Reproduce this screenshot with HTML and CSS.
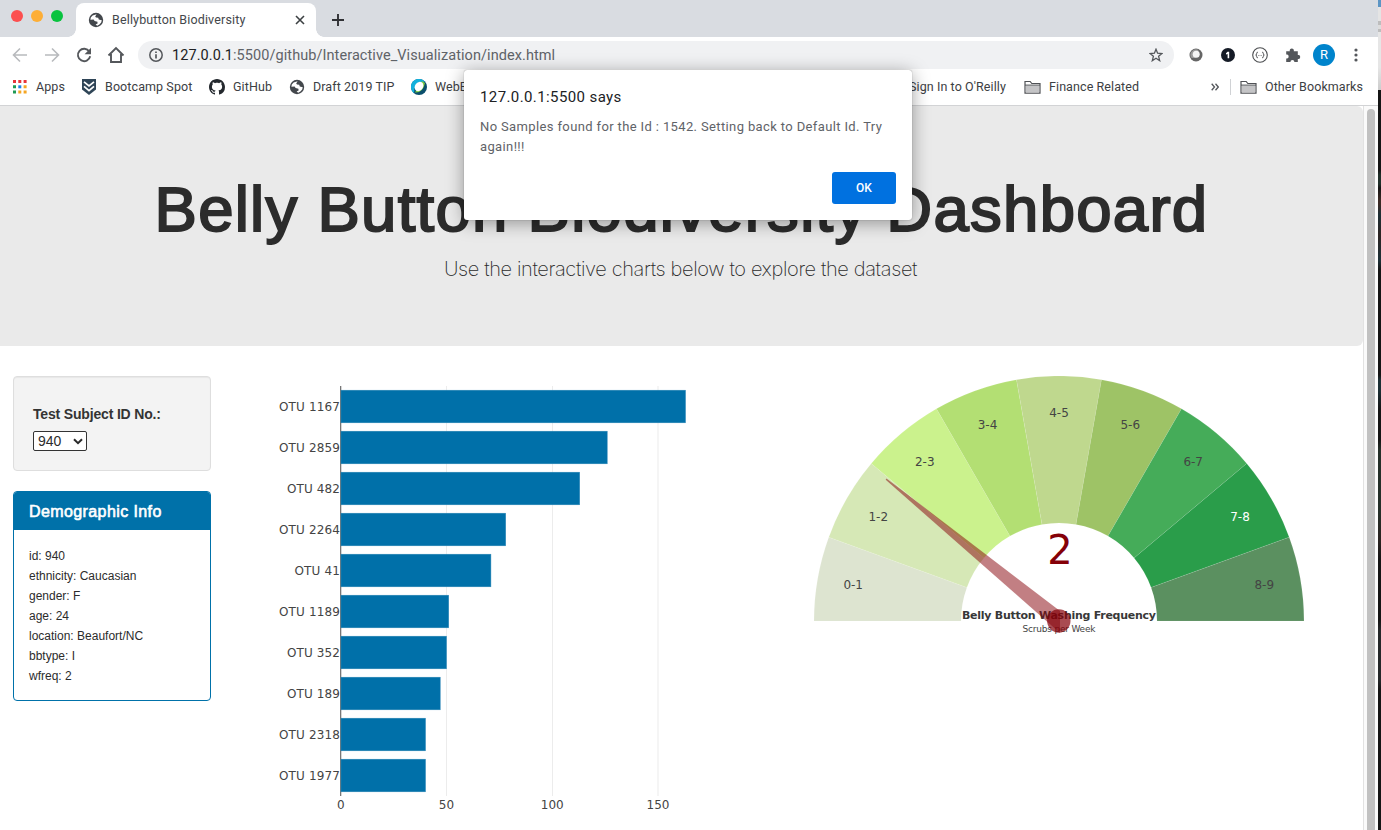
FILE: index.html
```html
<!DOCTYPE html>
<html lang="en">
<head>
<meta charset="utf-8">
<title>Bellybutton Biodiversity</title>
<link rel="stylesheet" href="styles.css">
</head>
<body>
<svg class="defs" width="0" height="0" aria-hidden="true">
  <symbol id="globe" viewBox="0 0 16 16">
    <circle cx="8" cy="8" r="7.2" fill="#43474c"/>
    <path d="M8.600 2.200 7.200 4.600 8 5.600 10.200 5.800 10.800 7.400 13.800 8.200 13.200 10.400 11.400 12.600 9.200 13.800 7.600 12.600 9.600 11.400 9.400 9.800 6.600 9 5.600 7.400 2.400 7.800 2.800 5.400 4.600 3.400z" fill="#fff"/>
  </symbol>
  <symbol id="folder" viewBox="0 0 17 15">
    <path d="M1 13.2V1.500h5.200l1.600 2H16v9.700z" fill="#fff" stroke="#505256" stroke-width="1.200"/>
    <path d="M2 5.600h13v6.900H2z" fill="#c4c4c6"/>
    <path d="M1 5.100h15" stroke="#505256"/>
  </symbol>
</svg>
<div class="screen">
  <div class="window">
    <header class="tabstrip">
      <div class="lights"><i class="red"></i><i class="amber"></i><i class="green"></i></div>
      <div class="tab">
        <svg class="favicon" width="16" height="16"><use href="#globe"/></svg>
        <span class="tab-title">Bellybutton Biodiversity</span>
        <svg class="close" width="10" height="10" viewBox="0 0 10 10"><path d="M1 1l8 8M9 1l-8 8" stroke="#3c4043" stroke-width="1.600"/></svg>
      </div>
      <svg class="newtab" width="12" height="12" viewBox="0 0 12 12"><path d="M6 0v12M0 6h12" stroke="#303134" stroke-width="1.900"/></svg>
    </header>

    <div class="toolbar">
      <svg class="nav" width="16" height="16" viewBox="0 0 16 16"><path d="M15 8H2M8 1.500 1.500 8 8 14.500" fill="none" stroke="#b8babd" stroke-width="1.600"/></svg>
      <svg class="nav" width="16" height="16" viewBox="0 0 16 16"><path d="M1 8h13M8 1.500 14.500 8 8 14.500" fill="none" stroke="#b8babd" stroke-width="1.600"/></svg>
      <svg class="nav" width="16" height="16" viewBox="0 0 16 16"><path d="M13.300 4.500A6.200 6.200 0 1 0 14.200 9.300" fill="none" stroke="#54575b" stroke-width="1.900"/><path d="M15 .8v6.400H8.600z" fill="#54575b"/></svg>
      <svg class="nav" width="18" height="18" viewBox="0 0 18 18"><path d="M1.500 9.500 9 2l7.500 7.500M4 8v8h10V8" fill="none" stroke="#54575b" stroke-width="1.900"/></svg>
      <div class="omnibox">
        <svg width="14" height="14" viewBox="0 0 14 14"><circle cx="7" cy="7" r="6.200" fill="none" stroke="#54575b" stroke-width="1.500"/><path d="M7 6.200v4.300M7 3.400v1.700" stroke="#54575b" stroke-width="1.700"/></svg>
        <span class="url"><b>127.0.0.1</b>:5500/github/Interactive_Visualization/index.html</span>
        <svg class="star" width="14" height="14" viewBox="0 0 14 14"><path d="M7 1.200 8.600 5.200 13 5.500 9.600 8.300 10.700 12.700 7 10.300 3.300 12.700 4.400 8.300 1 5.500 5.400 5.200z" fill="none" stroke="#54575b" stroke-width="1.300"/></svg>
      </div>
      <div class="extensions">
        <svg width="14" height="14" viewBox="0 0 14 14"><circle cx="7" cy="7" r="6.500" fill="#656565"/><path d="M2 9.500A5.600 5.600 0 0 1 9 1.800a5.500 5.500 0 0 1-7 7.700z" fill="#9b9b9b"/><circle cx="7.200" cy="6.300" r="3.500" fill="#f4f4f4"/></svg>
        <svg width="14" height="14" viewBox="0 0 14 14"><circle cx="7" cy="7" r="7" fill="#151b26"/><path d="M5 5.300 6.500 3.800h1.700v6.400H6.600V5.900L5 6.600z" fill="#fff"/></svg>
        <svg width="16" height="16" viewBox="0 0 16 16"><circle cx="8" cy="8" r="7.300" fill="#fff" stroke="#4b4d50" stroke-width="1.100"/><path d="M5.800 5.200Q4.600 5.200 4.700 6.400 4.800 7.800 3.700 8 4.800 8.200 4.700 9.600 4.600 10.800 5.800 10.800M10.200 5.200q1.200 0 1.100 1.200-.1 1.400 1 1.600-1.100.2-1 1.600.1 1.200-1.100 1.200M6.500 8.500h.8M8.700 8.500h.8" fill="none" stroke="#4b4d50"/></svg>
        <svg width="16" height="16" viewBox="0 0 16 16"><path d="M1.200 4.200h3.600a2.100 2.100 0 1 1 4 0h4v3.900a2 2 0 1 1 0 3.900v3H9.400a2 2 0 1 0-4 0H1.200v-3.600a2 2 0 1 0 0-3.900z" fill="#54575b"/></svg>
        <span class="avatar">R</span>
        <svg width="4" height="14" viewBox="0 0 4 14"><g fill="#54575b"><circle cx="2" cy="2" r="1.600"/><circle cx="2" cy="7" r="1.600"/><circle cx="2" cy="12" r="1.600"/></g></svg>
      </div>
    </div>

    <nav class="bookmarks">
      <span class="bm bm-apps"><svg width="14" height="14" viewBox="0 0 14 14"><path d="M0 0h3v3H0zM5.300 0h3v3h-3zM10.600 0h3v3h-3z" fill="#e8343a"/><path d="M0 5.300h3v3H0zM0 10.600h3v3H0z" fill="#1e9a55"/><path d="M5.300 5.300h3v3h-3z" fill="#1a80e6"/><path d="M10.600 5.300h3v3h-3zM5.300 10.600h3v3h-3zM10.600 10.600h3v3h-3z" fill="#f5a623"/></svg>Apps</span>
      <span class="bm bm-boot"><svg width="16" height="16" viewBox="0 0 16 16"><path d="M1 0h14v10.500L8 16 1 10.500z" fill="#2f4557"/><path d="M3 2.800 8 6.800l5-4M3 7.400 8 11.600l5-4.200" fill="none" stroke="#fff" stroke-width="1.700"/></svg>Bootcamp Spot</span>
      <span class="bm bm-git"><svg width="16" height="16" viewBox="0 0 16 16"><path fill="#24292e" d="M8 0C3.580 0 0 3.580 0 8c0 3.540 2.290 6.530 5.470 7.590.4.070.55-.17.55-.38 0-.19-.01-.82-.01-1.490-2.010.37-2.530-.49-2.690-.94-.09-.23-.48-.94-.82-1.130-.28-.15-.68-.52-.01-.53.63-.01 1.080.58 1.230.82.72 1.210 1.870.87 2.330.66.070-.52.28-.87.51-1.070-1.780-.2-3.640-.89-3.640-3.950 0-.87.31-1.590.82-2.150-.08-.2-.36-1.020.08-2.120 0 0 .67-.21 2.200.82.64-.18 1.320-.27 2-.27s1.360.09 2 .27c1.530-1.040 2.200-.82 2.200-.82.44 1.100.16 1.920.08 2.120.51.56.82 1.270.82 2.150 0 3.070-1.870 3.750-3.650 3.950.29.25.54.73.54 1.480 0 1.070-.01 1.930-.01 2.200 0 .21.15.46.55.38A8.010 8.010 0 0 0 16 8c0-4.420-3.580-8-8-8z"/></svg>GitHub</span>
      <span class="bm bm-draft"><svg width="16" height="16"><use href="#globe"/></svg>Draft 2019 TIP</span>
      <span class="bm bm-webex"><svg width="16" height="16" viewBox="0 0 16 16"><circle cx="8" cy="8" r="8" fill="#0b4f6c"/><path d="M3 14.200A8 8 0 1 1 14 2.700L8 3 3.500 9z" fill="#12b0dc"/><path d="M4 13.500Q12 14 14 4l-3-2z" fill="#7ac943"/><ellipse cx="7.700" cy="7.600" rx="4" ry="5" fill="#fff" transform="rotate(38 8 8)"/></svg>WebEx</span>
      <span class="bm bm-oreilly">Sign In to O'Reilly</span>
      <span class="bm bm-finance"><svg width="17" height="15"><use href="#folder"/></svg>Finance Related</span>
      <svg class="more" width="8" height="8" viewBox="0 0 8 8"><path d="M.7.8 3.500 4 .7 7.200M4.500.8 7.300 4 4.500 7.200" fill="none" stroke="#54575b" stroke-width="1.300"/></svg>
      <span class="bm bm-other"><svg width="17" height="15"><use href="#folder"/></svg>Other Bookmarks</span>
    </nav>

    <div class="viewport">
      <main class="page">
        <section class="jumbotron">
          <h1>Belly Button Biodiversity Dashboard</h1>
          <p>Use the interactive charts below to explore the dataset</p>
        </section>
        <div class="row">
          <aside class="side">
            <div class="well">
              <h5>Test Subject ID No.:</h5>
              <div class="select">940<svg width="10" height="7" viewBox="0 0 10 7"><path d="M1 1.200 5 5.200l4-4" fill="none" stroke="#2a2a2a" stroke-width="2"/></svg></div>
            </div>
            <div class="panel">
              <h3>Demographic Info</h3>
              <ul>
                <li>id: 940</li><li>ethnicity: Caucasian</li><li>gender: F</li><li>age: 24</li><li>location: Beaufort/NC</li><li>bbtype: I</li><li>wfreq: 2</li>
              </ul>
            </div>
          </aside>
          <svg class="bar-chart" width="560" height="454" viewBox="241 376 560 454">
            <g fill="#ececec"><path d="M446 386h1v410h-1zM552 386h1v410h-1zM657.500 386h1v410h-1z"/></g>
            <path d="M340 386h1.300v410H340z" fill="#777"/>
            <g fill="#0070a9" stroke="#2a86b7" stroke-width=".5">
              <rect x="341" y="390.200" width="344.500" height="32.600"/>
              <rect x="341" y="431.200" width="266.200" height="32.600"/>
              <rect x="341" y="472.200" width="238.700" height="32.600"/>
              <rect x="341" y="513.200" width="164.700" height="32.600"/>
              <rect x="341" y="554.200" width="149.900" height="32.600"/>
              <rect x="341" y="595.200" width="107.700" height="32.600"/>
              <rect x="341" y="636.200" width="105.500" height="32.600"/>
              <rect x="341" y="677.200" width="99.200" height="32.600"/>
              <rect x="341" y="718.200" width="84.500" height="32.600"/>
              <rect x="341" y="759.200" width="84.500" height="32.600"/>
            </g>
            <g class="tick" text-anchor="end">
              <text x="340" y="411" textLength="61">OTU 1167</text>
              <text x="340" y="452" textLength="61">OTU 2859</text>
              <text x="340" y="493" textLength="53">OTU 482</text>
              <text x="340" y="534" textLength="61">OTU 2264</text>
              <text x="340" y="575" textLength="45.500">OTU 41</text>
              <text x="340" y="616" textLength="61">OTU 1189</text>
              <text x="340" y="657" textLength="53">OTU 352</text>
              <text x="340" y="698" textLength="53">OTU 189</text>
              <text x="340" y="739" textLength="61">OTU 2318</text>
              <text x="340" y="780" textLength="61">OTU 1977</text>
            </g>
            <g class="tick" text-anchor="middle">
              <text x="340.700" y="809">0</text><text x="446.500" y="809">50</text><text x="552.300" y="809">100</text><text x="658" y="809">150</text>
            </g>
          </svg>
          <svg class="gauge" width="562" height="454" viewBox="801 376 562 454">
            <g transform="translate(1059 621)">
              <g stroke="#fff" stroke-opacity=".18" stroke-width=".5">
                <path fill="#dde4d0" d="M-245 0A245 245 0 0 1-230.200-83.800L-92.100-33.500A98 98 0 0 0-98 0z"/>
                <path fill="#d6e8b6" d="M-230.200-83.800A245 245 0 0 1-187.700-157.500L-75.100-63A98 98 0 0 0-92.100-33.500z"/>
                <path fill="#cbf28d" d="M-187.700-157.500A245 245 0 0 1-122.500-212.200L-49-84.900A98 98 0 0 0-75.100-63z"/>
                <path fill="#b3df73" d="M-122.500-212.200A245 245 0 0 1-42.500-241.300L-17-96.500A98 98 0 0 0-49-84.900z"/>
                <path fill="#bfd88e" d="M-42.500-241.300A245 245 0 0 1 42.500-241.300L17-96.500A98 98 0 0 0-17-96.500z"/>
                <path fill="#9ec366" d="M42.500-241.300A245 245 0 0 1 122.500-212.200L49-84.900A98 98 0 0 0 17-96.500z"/>
                <path fill="#45ac59" d="M122.500-212.200A245 245 0 0 1 187.700-157.500L75.100-63A98 98 0 0 0 49-84.900z"/>
                <path fill="#2a9d4a" d="M187.700-157.500A245 245 0 0 1 230.200-83.800L92.100-33.500A98 98 0 0 0 75.100-63z"/>
                <path fill="#5b9060" d="M230.200-83.800A245 245 0 0 1 245 0L98 0A98 98 0 0 0 92.100-33.500z"/>
              </g>
            </g>
            <g class="tick" text-anchor="middle">
              <text x="853.200" y="589">0-1</text><text x="878.300" y="521">1-2</text><text x="924.800" y="466">2-3</text>
              <text x="987.500" y="429">3-4</text><text x="1059" y="417">4-5</text><text x="1130.300" y="429">5-6</text>
              <text x="1193.200" y="466">6-7</text><text x="1240" y="521" class="on-dark">7-8</text><text x="1264.300" y="589">8-9</text>
            </g>
            <g text-anchor="middle">
              <text class="reading" x="1060" y="564">2</text>
              <text class="gauge-title" x="1059" y="619" textLength="194">Belly Button Washing Frequency</text>
              <text class="gauge-sub" x="1059" y="632" textLength="73">Scrubs per Week</text>
            </g>
            <path d="M1060 611 886.500 478.500 885.700 479.800 1060 633z" fill="#850008" fill-opacity=".5"/>
            <circle cx="1058.800" cy="621" r="11.700" fill="#850008" fill-opacity=".7"/>
          </svg>
        </div>
      </main>
      <div class="scrollbar"><div class="thumb"></div></div>
    </div>
  </div>
  <div class="desktop"><i class="blue"></i><i class="grey"></i><i class="code"></i></div>
</div>

<div class="dialog">
  <h2>127.0.0.1:5500 says</h2>
  <p>No Samples found for the Id : 1542. Setting back to Default Id. Try again!!!</p>
  <button>OK</button>
</div>
</body>
</html>
```
FILE: styles.css
```css
* { box-sizing: border-box; margin: 0; padding: 0; }
body { width: 1381px; height: 830px; overflow: hidden; position: relative; background: #fff; font-family: Roboto, sans-serif; }
svg { display: block; flex: none; }
.defs { position: absolute; }
.screen { display: flex; height: 830px; }
.window { width: 1378px; display: flex; flex-direction: column; }

/* Tab strip */
.tabstrip { height: 37px; background: #d9dce1; display: flex; align-items: flex-end; }
.lights { display: flex; gap: 8px; padding-left: 11px; width: 76px; height: 37px; padding-top: 10px; }
.lights i { width: 12px; height: 12px; border-radius: 50%; }
.red { background: #fc4f4f; }
.amber { background: #fdae36; }
.green { background: #09c33f; }
.tab { width: 240px; height: 34px; background: #fff; border-radius: 8px 8px 0 0; display: flex; align-items: center; padding: 0 11px 0 12px; position: relative; }
.tab::before, .tab::after { content: ""; position: absolute; bottom: 0; width: 8px; height: 8px; }
.tab::before { left: -8px; background: radial-gradient(circle at 0 0, transparent 7.500px, #fff 8px); }
.tab::after { right: -8px; background: radial-gradient(circle at 100% 0, transparent 7.500px, #fff 8px); }
.tab-title { margin-left: 8px; padding-bottom: 2px; font-size: 12.500px; letter-spacing: .15px; color: #44474b; flex: 1; white-space: nowrap; }
.newtab { margin: 0 0 11px 16px; }

/* Toolbar */
.toolbar { height: 36px; display: flex; align-items: center; padding-left: 12px; }
.nav { margin-right: 16px; }
.nav:nth-child(4) { margin: 0 13px 0 -1px; }
.omnibox { width: 1036px; height: 28px; border-radius: 14px; background: #f0f1f3; display: flex; align-items: center; padding: 0 11px; }
.url { margin-left: 9px; flex: 1; font-size: 14.500px; letter-spacing: .07px; color: #5f6368; }
.url b { font-weight: 400; color: #202124; }
.extensions { display: flex; align-items: center; margin-left: 15px; gap: 17px; }
.extensions svg:nth-child(2) { margin-left: 1px; }
.avatar { width: 22px; height: 22px; margin: 0 0 0 -5px; border-radius: 50%; background: #0084cc; color: #fff; font-size: 13px; line-height: 22px; text-align: center; }
.extensions .avatar + svg { margin-left: 2px; }

/* Bookmarks bar */
.bookmarks { height: 33px; display: flex; align-items: center; padding: 0 15px 4px 13px; border-bottom: 1px solid #d2d3d5; color: #3c4043; font-size: 12.500px; line-height: 16px; letter-spacing: .09px; white-space: nowrap; }
.bm { display: flex; align-items: center; gap: 8px; flex: none; }
.bm-apps { width: 68px; gap: 9px; }
.bm-boot { width: 128px; }
.bm-git { width: 80px; }
.bm-draft { width: 122px; }
.bm-webex { width: 498px; }
.bm-oreilly { width: 115px; }
.bm-finance { width: 187px; }
.more { margin-right: 11px; }
.bm-other { border-left: 1px solid #d0d2d5; padding-left: 9px; height: 16px; }

/* Page */
.viewport { flex: 1; display: flex; min-height: 0; }
.page { width: 1363px; overflow: hidden; font-family: "Liberation Sans", sans-serif; color: #2c2c2c; }
.jumbotron { height: 240px; background: #eaeaea; border-radius: 0 6px 6px 0; padding-top: 69px; text-align: center; }
.jumbotron h1 { font-weight: 400; font-size: 63.500px; line-height: 69px; letter-spacing: 1.270px; -webkit-text-stroke: 2px #2c2c2c; white-space: nowrap; }
.jumbotron p { margin-top: 10px; padding-right: 2px; font: 200 20px/30px Inter, sans-serif; letter-spacing: -.37px; }
.row { display: flex; margin-top: 30px; height: 454px; }
.side { width: 228px; margin-left: 13px; padding-right: 30px; }
.well { height: 95px; border: 1px solid #dedede; border-radius: 4px; background: #f3f3f3; box-shadow: inset 0 1px 1px rgba(0,0,0,.05); padding: 29px 19px; }
.well h5 { font-size: 14px; line-height: 16px; letter-spacing: -.17px; color: #333; }
.select { margin-top: 9px; width: 54px; height: 20px; border: 1px solid #333; border-radius: 2px; background: #fff; font-size: 14px; display: flex; align-items: center; justify-content: space-between; padding: 0 3px 0 4px; }
.panel { margin-top: 20px; height: 210px; border: 1px solid #0071a9; border-radius: 4px; overflow: hidden; }
.panel h3 { height: 38px; background: #0071a9; color: #fff; font-weight: 400; font-size: 16px; line-height: 39px; letter-spacing: .4px; padding-left: 15px; -webkit-text-stroke: .6px #fff; }
.panel ul { list-style: none; padding: 16px 15px; font-size: 12px; line-height: 20px; }
.tick { font-family: "DejaVu Sans", sans-serif; font-size: 12px; fill: #444; }
.tick .on-dark { fill: #fff; }
.gauge-title { font: bold 11px "DejaVu Sans", sans-serif; fill: #383838; }
.gauge-sub { font: 9px "DejaVu Sans", sans-serif; fill: #444; }
.reading { font: 40px "DejaVu Sans", sans-serif; fill: #850008; }

.scrollbar { width: 15px; border-left: 1px solid #e2e2e2; background: #fafafa; padding: 3px 3px 0; }
.thumb { height: 740px; border-radius: 4px; background: #c1c1c1; }

/* Strip of the desktop behind the window */
.desktop { width: 3px; display: flex; flex-direction: column; }
.blue { height: 7px; background: #5c95c4; }
.grey { height: 83px; background: linear-gradient(#e4e4e4 0 14px, #bdbdbd 14px 18px, #ddd 18px 22px, #bdbdbd 22px 25px, #e6e6e6 25px 60px, #ccc); }
.code { flex: 1; background: #151515; background-image: linear-gradient(transparent 80px, #20302a 85px 94px, #151515 98px, #3b2a25 110px 114px, #1d3036 125px, #2d2523 145px, #1d3138 170px, #151515 180px 285px, #1c3035 290px 300px, #151515 320px 350px, #25302a 360px 420px, #2b2421 450px, #151515 470px 530px, #25282a 540px 590px, #151515 600px); }

/* Alert */
.dialog { position: absolute; left: 464px; top: 70px; width: 448px; height: 150px; background: #fff; border-radius: 3px; box-shadow: 0 0 1px rgba(0,0,0,.5), 0 3px 18px rgba(0,0,0,.38); padding: 17px 16px; }
.dialog h2 { font-weight: 400; font-size: 15px; line-height: 20px; letter-spacing: .4px; color: #202124; }
.dialog p { margin-top: 10px; font-size: 13px; line-height: 20px; letter-spacing: .37px; color: #5f6368; }
.dialog button { display: block; margin: 15px 0 0 auto; width: 64px; height: 32px; border: 0; border-radius: 3px; background: #0071e0; color: #fff; font: 500 12px Roboto, sans-serif; }
```
